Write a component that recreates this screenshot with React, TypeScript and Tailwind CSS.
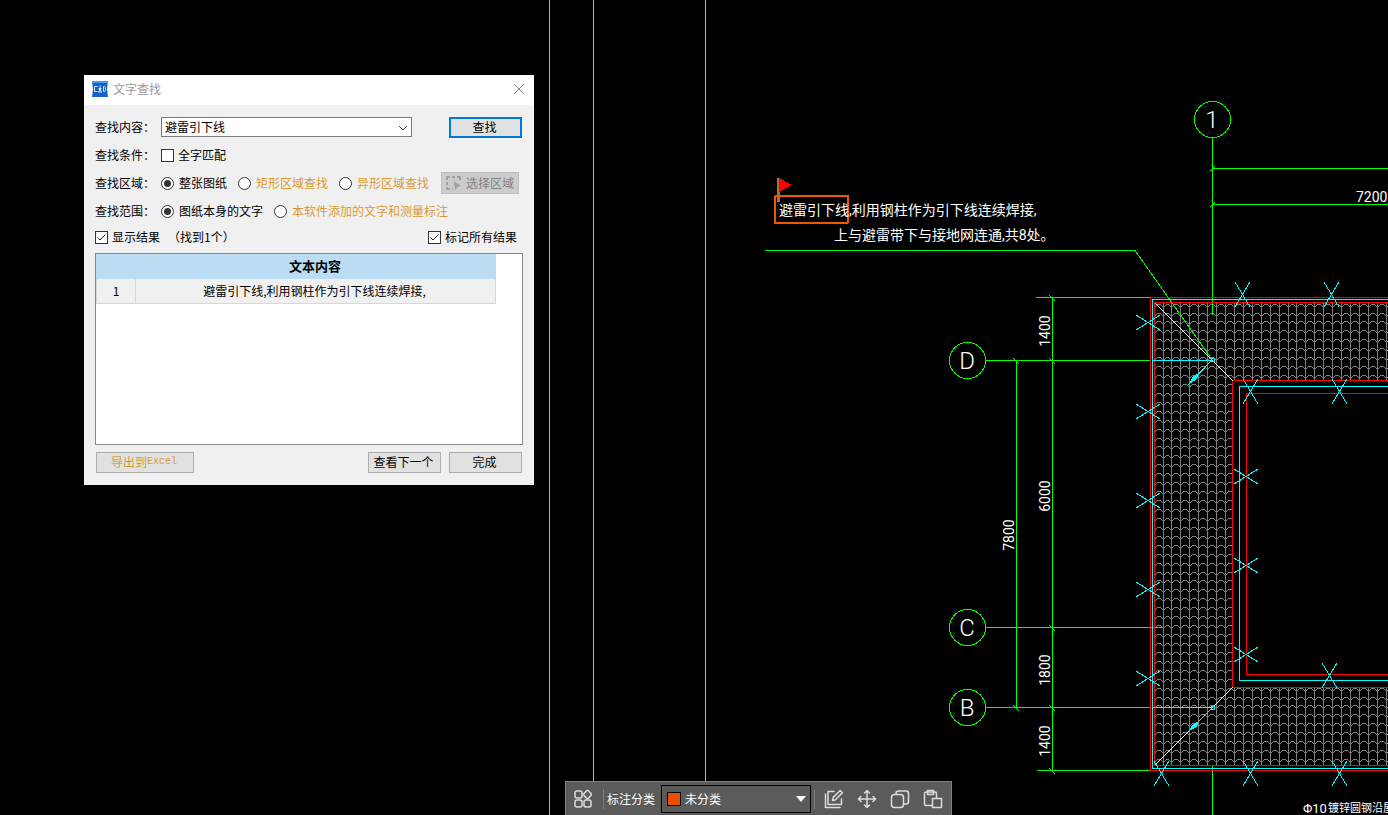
import { useState } from "react"
import type { ReactNode } from "react"

interface CheckProps {
  label: string
  checked: boolean
  onChange: (value: boolean) => void
}

interface RadioProps {
  name: string
  label: string
  checked: boolean
  premium?: boolean
  onSelect: () => void
}

// Spacing of the roof tile hatch
const TILE = 8.93

// Tile hatch over the whole roof rectangle, the courtyard is clipped away
function buildHatch(width: number, top: number, bottom: number) {
  let d = ""
  for (let i = 0; i * TILE < width; i++) {
    const x = Math.round(1153.6 + i * TILE)
    const next = Math.round(1153.6 + (i + 1) * TILE)
    if (i > 0) d += `M${x}.5 ${top}V${bottom}`
    for (let j = 0; 304 + j * TILE < bottom; j++) {
      const y = Math.round(303.6 + j * TILE)
      d += `M${x} ${y + 2}.5H${x + 2}M${x + 2} ${y + 1}.5H${x + 3}`
      d += `M${x + 3} ${y}.5H${next - 2}M${next - 2} ${y + 1}.5H${next - 1}M${next - 1} ${y + 2}.5H${next}`
    }
  }
  return d
}

const hatch = buildHatch(1600, 303, 765)

const flatMarks = [
  [1147, 322],
  [1147, 411],
  [1147, 500],
  [1147, 589],
  [1147, 678],
  [1245, 476],
  [1245, 565],
  [1245, 654],
]

const tallMarks = [
  [1242, 294],
  [1331, 294],
  [1250, 391],
  [1339, 391],
  [1329, 675],
  [1161, 773],
  [1250, 773],
  [1339, 773],
]

const bubbles = [
  { x: 1212, y: 119, label: "1" },
  { x: 967, y: 360, label: "D" },
  { x: 967, y: 627, label: "C" },
  { x: 967, y: 707, label: "B" },
]

const dimensions = [
  { x: 1050, y: 331, label: "1400" },
  { x: 1050, y: 496, label: "6000" },
  { x: 1014, y: 535, label: "7800" },
  { x: 1050, y: 670, label: "1800" },
  { x: 1050, y: 741, label: "1400" },
]

const ticks = [
  [1052, 297],
  [1052, 360],
  [1052, 627],
  [1052, 707],
  [1052, 770],
  [1016, 360],
  [1016, 707],
]

function Drawing() {
  return (
    <svg
      className="absolute inset-0 h-full w-full"
      shapeRendering="crispEdges"
      fill="none"
      role="img"
      aria-label="CAD drawing"
    >
      <defs>
        <clipPath id="roof">
          <path d="M1155 303H2800V380H1233V688H2800V765H1155z" />
        </clipPath>
      </defs>

      {/* Sheet lines */}
      <path d="M549.5 0V1600M593.5 0V1600M705.5 0V1600" stroke="#33e6f0" />

      {/* Roof tiles */}
      <path d={hatch} stroke="#808080" clipPath="url(#roof)" />

      {/* Axes and dimension lines */}
      <g stroke="#00ff00">
        <path d="M765 250.5H1135L1212 359.5" />
        <path d="M1212.5 138V315M1212.5 766V1600M1212 168.5H2800M1212 204.5H2800" />
        <path d="M985 360.5H1150M985 627.5H1162M985 707.5H1150" />
        <path d="M1036 297.5H1150M1037 770.5H1150M1052.5 297V771M1016.5 360V708" />
        {ticks.map(([x, y]) => (
          <path key={`${x}-${y}`} d={`M${x - 3} ${y - 2}l6 6`} />
        ))}
        <path d="M1210 171l5 -5M1210 207l5 -5" />
        {bubbles.map((bubble) => (
          <circle key={bubble.label} cx={bubble.x + 0.5} cy={bubble.y + 0.5} r="18" />
        ))}
      </g>

      {/* Eaves and courtyard outlines */}
      <g stroke="#ff0000">
        <path d="M2800 297.5H1150.5V770.5H2800M2800 302.5H1154.5V765.5H2800" />
        <path d="M2800 380.5H1232.5V687.5H2800M2800 393.5H1246.5V674.5H2800" />
      </g>
      <g stroke="#00ffff">
        <path d="M2800 299.5H1152.5V768.5H2800M2800 386.5H1239.5V680.5H2800" />
        <path d="M1152 360.5H1212M1152 707.5H1212" />
      </g>
      <path d="M1155 303L1233 381M1155 765L1233 687" stroke="#ffffff" />

      {/* Lightning strip marks */}
      <g stroke="#00ffff">
        {flatMarks.map(([x, y]) => (
          <path key={`${x}-${y}`} d={`M${x - 11} ${y - 7}l24 15m0 -15l-24 15`} />
        ))}
        {tallMarks.map(([x, y]) => (
          <path key={`${x}-${y}`} d={`M${x - 7} ${y - 12}l15 25m0 -25l-15 25`} />
        ))}
        <path d="M1212 360L1188 385M1212 708L1190 730" />
        <circle cx="1213" cy="360" r="2" />
        <circle cx="1213" cy="708" r="2" />
        <path d="M1190 383l3 -6l5 -3l-2 5zM1190 730l3 -5l5 -3l-2 5z" fill="#00ffff" />
      </g>

      {/* Flag and frame of the found text */}
      <path d="M777 178h3v24h-3z" fill="#b0703c" />
      <path d="M779 178l13 7l-13 7z" fill="#ff0000" />
      <rect x="775" y="196" width="73" height="27" rx="1" stroke="#f05800" strokeWidth="2" />

      <g fill="#ffffff" className="font-['Roboto','Noto_Sans_CJK_SC',sans-serif]">
        <text x="779" y="215" fontSize="14">
          避雷引下线,利用钢柱作为引下线连续焊接,
        </text>
        <text x="834" y="240" fontSize="14">
          上与避雷带下与接地网连通,共8处。
        </text>
        <text x="1303" y="813" fontSize="13">
          Φ10
        </text>
        <text x="1328" y="812" fontSize="11">
          镀锌圆钢沿屋
        </text>
      </g>
      <g fill="#ffffff" className="font-['Roboto','Liberation_Sans',sans-serif]">
        <text x="1356" y="202" fontSize="14">
          7200
        </text>
        {dimensions.map((dim) => (
          <text
            key={dim.y}
            x={dim.x}
            y={dim.y}
            fontSize="14"
            textAnchor="middle"
            transform={`rotate(-90 ${dim.x} ${dim.y})`}
          >
            {dim.label}
          </text>
        ))}
        {bubbles.map((bubble) => (
          <text key={bubble.label} x={bubble.x} y={bubble.y + 9} fontSize="24" textAnchor="middle" className="font-light">
            {bubble.label}
          </text>
        ))}
      </g>
    </svg>
  )
}

function Check({ label, checked, onChange }: CheckProps) {
  return (
    <label className="flex items-center gap-1">
      <span className="grid h-[13px] w-[13px]">
        <input
          type="checkbox"
          checked={checked}
          onChange={(e) => onChange(e.target.checked)}
          className="peer col-start-1 row-start-1 appearance-none border border-[#333333] bg-white"
        />
        <svg
          viewBox="0 0 13 13"
          fill="none"
          stroke="#222222"
          className="pointer-events-none invisible col-start-1 row-start-1 h-[13px] w-[13px] peer-checked:visible"
        >
          <path d="M2.5 6.5L5 9L10.5 3.5" />
        </svg>
      </span>
      {label}
    </label>
  )
}

function Radio({ name, label, checked, premium, onSelect }: RadioProps) {
  return (
    <label className="flex items-center gap-[5px]">
      <span className="grid h-[13px] w-[13px]">
        <input
          type="radio"
          name={name}
          checked={checked}
          onChange={onSelect}
          className="peer col-start-1 row-start-1 appearance-none rounded-full border border-[#333333] bg-white"
        />
        <svg
          viewBox="0 0 13 13"
          fill="#333333"
          className="pointer-events-none invisible col-start-1 row-start-1 h-[13px] w-[13px] peer-checked:visible"
        >
          <circle cx="6.5" cy="6.5" r="3.5" />
        </svg>
      </span>
      <span className={premium ? "text-[#d99a36]" : "text-black"}>{label}</span>
    </label>
  )
}

function DialogButton({ children, className }: { children: ReactNode; className: string }) {
  return (
    <button
      type="button"
      className={`flex h-[21px] items-center justify-center bg-[#e1e1e1] pr-[2px] pb-px whitespace-nowrap ${className}`}
    >
      {children}
    </button>
  )
}

function SearchDialog() {
  const [wholeWord, setWholeWord] = useState(false)
  const [showResults, setShowResults] = useState(true)
  const [markAll, setMarkAll] = useState(true)
  const [area, setArea] = useState("sheet")
  const [scope, setScope] = useState("drawing")

  return (
    <section
      role="dialog"
      aria-labelledby="dialog-title"
      className="absolute top-[75px] left-[84px] w-[450px] bg-[#f0f0f0] pb-3 text-xs text-black"
    >
      <header className="flex h-[30px] items-center bg-white px-2 pb-[2px]">
        <svg viewBox="0 0 16 16" className="h-4 w-4">
          <path d="M0 0h16l-1 8l1 8H0l1 -8z" fill="#1464c8" />
          <path d="M0 0h16v2H0z" fill="#4a9cf0" />
          <path
            d="M5.5 5.5H2.5V10.5H5.5M8 4.5V12M6.5 7.5H9.5M6.5 11.5L8 8L9.5 11.5M11.5 5.5V10.5H12.5L13.5 9.5V6.5L12.5 5.5z"
            fill="none"
            stroke="#ffffff"
            strokeWidth="0.8"
          />
        </svg>
        <h1 id="dialog-title" className="ml-[5px] text-[#999999]">
          文字查找
        </h1>
        <button type="button" aria-label="关闭" className="ml-auto flex h-[14px] w-[14px] items-center justify-center">
          <svg viewBox="0 0 12 12" fill="none" stroke="#888888" className="h-3 w-3">
            <path d="M1 1L11 11M11 1L1 11" />
          </svg>
        </button>
      </header>

      <div className="flex flex-col px-[11px] pt-[11px]">
        <div className="flex flex-col gap-[6px]">
          <div className="flex h-[22px] items-center">
            <label htmlFor="keyword" className="w-[66px]">
              查找内容：
            </label>
            <div className="relative h-5 w-[251px]">
              <select
                id="keyword"
                className="block h-full w-full appearance-none border border-[#7a7a7a] bg-white pr-5 pl-[3px] leading-none"
              >
                <option>避雷引下线</option>
              </select>
              <svg
                viewBox="0 0 10 6"
                fill="none"
                stroke="#444444"
                className="pointer-events-none absolute top-2 right-1 h-[6px] w-[10px]"
              >
                <path d="M1 1L5 5L9 1" />
              </svg>
            </div>
            <DialogButton className="mr-px ml-auto w-[73px] border-2 border-[#0078d7]">查找</DialogButton>
          </div>

          <div className="flex h-[22px] items-center">
            <span className="w-[66px]">查找条件：</span>
            <Check label="全字匹配" checked={wholeWord} onChange={setWholeWord} />
          </div>

          <div className="flex h-[22px] items-center">
            <span className="w-[66px]">查找区域：</span>
            <div className="flex gap-[11px]">
              <Radio name="area" label="整张图纸" checked={area === "sheet"} onSelect={() => setArea("sheet")} />
              <Radio
                name="area"
                label="矩形区域查找"
                premium
                checked={area === "rect"}
                onSelect={() => setArea("rect")}
              />
              <Radio
                name="area"
                label="异形区域查找"
                premium
                checked={area === "shape"}
                onSelect={() => setArea("shape")}
              />
            </div>
            <button
              type="button"
              disabled
              className="mr-1 ml-auto flex h-[22px] w-[78px] items-center justify-center gap-1 border border-[#bfbfbf] bg-[#cccccc] text-[#838383]"
            >
              <svg viewBox="0 0 16 16" fill="none" stroke="#a0a0a0" strokeWidth="2" className="h-4 w-4">
                <path d="M1 5V2H4M6 2H9M11 2H14V5M1 7V10M1 12V14H4M6 14H7" />
                <path d="M8 6L15 11L12 11.5L9 15z" fill="#a0a0a0" stroke="none" />
              </svg>
              选择区域
            </button>
          </div>

          <div className="flex h-[22px] items-center">
            <span className="w-[66px]">查找范围：</span>
            <div className="flex gap-[11px]">
              <Radio
                name="scope"
                label="图纸本身的文字"
                checked={scope === "drawing"}
                onSelect={() => setScope("drawing")}
              />
              <Radio
                name="scope"
                label="本软件添加的文字和测量标注"
                premium
                checked={scope === "notes"}
                onSelect={() => setScope("notes")}
              />
            </div>
          </div>
        </div>

        <div className="mt-1 flex h-[22px] items-center">
          <Check label="显示结果" checked={showResults} onChange={setShowResults} />
          <span className="ml-2">（找到1个）</span>
          <div className="mr-[6px] ml-auto">
            <Check label="标记所有结果" checked={markAll} onChange={setMarkAll} />
          </div>
        </div>

        {/* Search results */}
        <div className="mt-[5px] h-48 border border-[#828790] bg-white">
          <table className="w-[400px] table-fixed border-separate border-spacing-0">
            <thead>
              <tr className="h-[25px] bg-[#bbdcf3]">
                <th className="w-10 p-0" />
                <th className="p-0 pr-[2px] pb-px text-[13px] font-bold">文本内容</th>
              </tr>
            </thead>
            <tbody>
              <tr className="h-[25px] bg-[#f0f0f0] text-center">
                <td className="border border-t-0 border-[#d8d8d8] p-0">1</td>
                <td className="border-r border-b border-[#d8d8d8] p-0 pr-[2px]">
                  避雷引下线,利用钢柱作为引下线连续焊接,
                </td>
              </tr>
            </tbody>
          </table>
        </div>

        <div className="mt-[7px] flex px-px">
          <DialogButton className="w-[98px] border border-[#adadad] text-[#d99a36]">
            导出到<span className="font-['Liberation_Mono',monospace] text-[10px]">Excel</span>
          </DialogButton>
          <DialogButton className="ml-auto w-[73px] border border-[#adadad]">查看下一个</DialogButton>
          <DialogButton className="ml-2 w-[73px] border border-[#adadad]">完成</DialogButton>
        </div>
      </div>
    </section>
  )
}

function ToolIcon({ label, children }: { label: string; children: ReactNode }) {
  return (
    <button type="button" aria-label={label} className="flex h-5 w-5 items-center justify-center">
      <svg
        viewBox="0 0 20 20"
        fill="none"
        stroke="#dcdcdc"
        strokeWidth="1.5"
        strokeLinejoin="round"
        strokeLinecap="round"
        className="h-5 w-5"
      >
        {children}
      </svg>
    </button>
  )
}

function Toolbar() {
  return (
    <div
      role="toolbar"
      className="absolute bottom-0 left-[565px] flex h-[34px] w-[387px] items-center border-t border-r border-l border-[#808080] bg-[#5b5b5b] pl-[7px] text-xs text-white"
    >
      <ToolIcon label="全部">
        <rect x="2" y="2" width="7" height="7" rx="2" />
        <rect x="2" y="11" width="7" height="7" rx="2" />
        <rect x="11" y="11" width="7" height="7" rx="2" />
        <path d="M13.6 1.8Q14.5 1 15.4 1.8L18 4.6Q18.8 5.5 18 6.4L15.4 9.2Q14.5 10 13.6 9.2L11 6.4Q10.2 5.5 11 4.6z" />
      </ToolIcon>
      <span className="ml-[10px] h-5 w-px bg-[#7c7c7c]" />
      <label htmlFor="category" className="ml-[3px]">
        标注分类
      </label>
      <div className="relative ml-[6px] flex h-7 w-[150px] items-center border border-black pl-[5px]">
        <span className="h-[14px] w-[14px] border border-black bg-[#e85000]" />
        <select id="category" className="h-full flex-1 appearance-none pl-1 text-white">
          <option>未分类</option>
        </select>
        <svg viewBox="0 0 10 6" className="pointer-events-none absolute right-1 h-[6px] w-[10px]">
          <path d="M0 0H10L5 6z" fill="#ffffff" />
        </svg>
      </div>
      <span className="ml-[3px] h-5 w-px bg-[#7c7c7c]" />
      <div className="ml-[9px] flex gap-[13px]">
        <ToolIcon label="编辑">
          <path d="M10 2.5H4V15.5H17.5V10M1.5 5V18.5H16" />
          <path d="M8.5 11.5L9.2 8.4L16.2 1.5L18.4 3.8L11.5 10.8z" />
        </ToolIcon>
        <ToolIcon label="移动">
          <path d="M10 1.5V18.5M1.5 10H18.5M7.5 4L10 1.5L12.5 4M7.5 16L10 18.5L12.5 16M4 7.5L1.5 10L4 12.5M16 7.5L18.5 10L16 12.5" />
        </ToolIcon>
        <ToolIcon label="复制">
          <rect x="1.5" y="5.5" width="12" height="13" rx="3" />
          <path d="M6 5.5V4.5A2.5 2.5 0 0 1 8.5 2H16A2.5 2.5 0 0 1 18.5 4.5V12.5A2.5 2.5 0 0 1 16 15H13.5" />
        </ToolIcon>
        <ToolIcon label="粘贴">
          <path d="M9 16.5H3A1.5 1.5 0 0 1 1.5 15V4.5A1.5 1.5 0 0 1 3 3H12A1.5 1.5 0 0 1 13.5 4.5V9" />
          <path d="M4.5 1.5H10.5V5.5H4.5zM9.5 9.5H18.5V18.5H9.5z" />
        </ToolIcon>
      </div>
    </div>
  )
}

export default function App() {
  return (
    <main className="relative min-h-screen overflow-hidden bg-black font-['Noto_Sans_CJK_SC',sans-serif]">
      <Drawing />
      <SearchDialog />
      <Toolbar />
    </main>
  )
}
